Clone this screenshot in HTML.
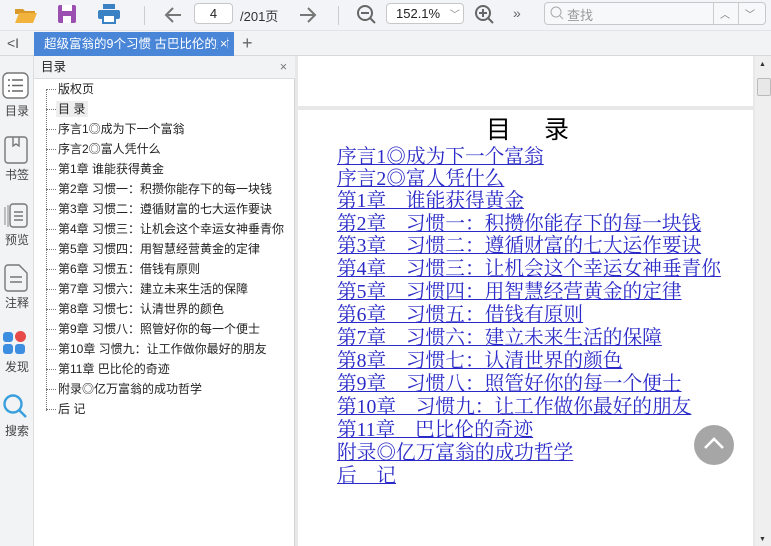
<!DOCTYPE html>
<html><head><meta charset="utf-8"><style>
*{margin:0;padding:0;box-sizing:border-box}
body{width:771px;height:546px;overflow:hidden;background:#f2f3f5;font-family:"Liberation Sans","Noto Sans CJK SC",sans-serif;position:relative;font-size:12px;color:#222}
.abs{position:absolute}
#tb{left:0;top:0;width:771px;height:31px;background:#f2f4f7;border-bottom:1px solid #e2e4e8}
#tabs{left:0;top:32px;width:771px;height:24px;background:#f2f3f5;border-bottom:1px solid #d8d8d8}
#tab{left:34px;top:32px;width:200px;height:24px;background:#4a86d8;color:#fff;font-size:12.5px;line-height:24px;padding-left:10px;white-space:nowrap;overflow:hidden}
#lc{left:0;top:56px;width:34px;height:490px;background:#f2f3f5;border-right:1px solid #ddd}
#sb{left:34px;top:56px;width:261px;height:490px;background:#fff;border-right:1px solid #d4d4d4}
#sbh{left:34px;top:56px;width:261px;height:23px;background:#f2f3f5;border-bottom:1px solid #ddd;font-size:12.5px;line-height:22px;padding-left:7px}
.toc{left:46px;font-size:12px;line-height:14px;white-space:nowrap}
.toc:before{content:"";display:inline-block;width:10px;border-top:1px dotted #777;vertical-align:middle;margin-right:2px}
#vl{left:46px;top:90px;height:321px;border-left:1px dotted #777}
#doc{left:295px;top:56px;width:460px;height:490px;background:#e8e8e8}
.pg{background:#fff}
.lk{left:337px;font-family:"Liberation Serif","Noto Serif CJK SC",serif;font-size:19.7px;line-height:22px;color:#2a2ac8;text-decoration:underline;white-space:pre}
.ic{position:absolute;left:4px;width:26px;text-align:center;font-size:12px;color:#444}
</style></head><body>
<div id="tb" class="abs">
<svg class="abs" style="left:14px;top:5px" width="24" height="20"><path d="M1 4h8l2 2h10v3H1z" fill="#d99a2b"/><path d="M1 18l4-10h18l-4 10z" fill="#f2b33d"/></svg>
<svg class="abs" style="left:57px;top:4px" width="20" height="20"><rect x="1" y="1" width="18" height="18" rx="2" fill="#9b4fb0"/><rect x="5" y="1" width="10" height="6" fill="#fff"/><rect x="6" y="12" width="8" height="7" fill="#fff"/></svg>
<svg class="abs" style="left:98px;top:4px" width="22" height="20"><rect x="5" y="0" width="12" height="5" fill="#3b82c4"/><rect x="0" y="6" width="22" height="9" rx="2" fill="#3b82c4"/><rect x="5" y="11" width="12" height="8" fill="#fff" stroke="#3b82c4" stroke-width="2"/></svg>
<div class="abs" style="left:144px;top:6px;height:19px;border-left:1px solid #ccc"></div>
<svg class="abs" style="left:163px;top:5px" width="20" height="20"><path d="M18 10H3M10 3L3 10l7 7" stroke="#777" stroke-width="2" fill="none"/></svg>
<div class="abs" style="left:194px;top:3px;width:39px;height:21px;border:1px solid #c8c8c8;border-radius:4px;background:#fff;text-align:center;line-height:19px;font-size:13px">4</div>
<div class="abs" style="left:240px;top:6px;font-size:13px;color:#333">/201页</div>
<svg class="abs" style="left:298px;top:5px" width="20" height="20"><path d="M2 10h15M10 3l7 7-7 7" stroke="#777" stroke-width="2" fill="none"/></svg>
<div class="abs" style="left:338px;top:6px;height:19px;border-left:1px solid #ccc"></div>
<svg class="abs" style="left:356px;top:4px" width="22" height="22"><circle cx="9" cy="9" r="7" stroke="#666" stroke-width="2" fill="none"/><path d="M5 9h8M14 14l5 5" stroke="#666" stroke-width="2"/></svg>
<div class="abs" style="left:386px;top:3px;width:78px;height:21px;border:1px solid #c8c8c8;border-radius:4px;background:#fff;line-height:19px;font-size:13px;padding-left:9px">152.1% <span style="color:#888;font-size:10px;margin-left:6px">﹀</span></div>
<svg class="abs" style="left:474px;top:4px" width="22" height="22"><circle cx="9" cy="9" r="7" stroke="#666" stroke-width="2" fill="none"/><path d="M5 9h8M9 5v8M14 14l5 5" stroke="#666" stroke-width="2"/></svg>
<div class="abs" style="left:513px;top:5px;font-size:14px;color:#666">»</div>
<div class="abs" style="left:544px;top:2px;width:222px;height:23px;border:1px solid #c8c8c8;border-radius:4px;background:#f6f8fa"></div>
<svg class="abs" style="left:550px;top:6px" width="14" height="14"><circle cx="6" cy="6" r="5" stroke="#aaa" fill="none"/><path d="M10 10l3 3" stroke="#aaa"/></svg>
<div class="abs" style="left:567px;top:5px;color:#999;font-size:13px">查找</div>
<div class="abs" style="left:713px;top:3px;height:21px;border-left:1px solid #ccc"></div>
<div class="abs" style="left:738px;top:3px;height:21px;border-left:1px solid #ccc"></div>
<div class="abs" style="left:720px;top:6px;color:#777;font-size:10px">︿</div>
<div class="abs" style="left:745px;top:6px;color:#777;font-size:10px">﹀</div>
</div>
<div id="tabs" class="abs"><div class="abs" style="left:7px;top:3px;font-size:14px;color:#555">&lt;I</div><div class="abs" style="left:242px;top:1px;font-size:18px;color:#666">+</div></div>
<div id="tab" class="abs">超级富翁的9个习惯 古巴比伦的财<span style="position:absolute;left:184px;top:0;background:#4a86d8;padding-left:2px">×</span></div>
<div id="lc" class="abs">
<svg class="abs" style="left:2px;top:16px" width="27" height="27"><rect x="1" y="1" width="25" height="25" rx="5" fill="#fff" stroke="#777" stroke-width="1.4"/><path d="M6 8h2M6 13.5h2M6 19h2M10 8h11M10 13.5h11M10 19h11" stroke="#666" stroke-width="1.6"/></svg>
<div class="ic" style="top:46px">目录</div>
<svg class="abs" style="left:4px;top:80px" width="24" height="28"><rect x="1" y="1" width="22" height="26" rx="3" fill="none" stroke="#777" stroke-width="1.4"/><path d="M9 1v9l3-2 3 2V1" fill="none" stroke="#777" stroke-width="1.4"/></svg>
<div class="ic" style="top:110px">书签</div>
<svg class="abs" style="left:3px;top:145px" width="26" height="28"><path d="M2 24V6M5 26V4" stroke="#888"/><rect x="7" y="3" width="17" height="23" rx="3" fill="none" stroke="#777" stroke-width="1.4"/><path d="M11 11h9M11 15h9M11 19h9" stroke="#777" stroke-width="1.4"/></svg>
<div class="ic" style="top:175px">预览</div>
<svg class="abs" style="left:4px;top:208px" width="24" height="28"><path d="M1 4a3 3 0 013-3h11l8 8v15a3 3 0 01-3 3H4a3 3 0 01-3-3z" fill="none" stroke="#777" stroke-width="1.4"/><path d="M6 13h12M6 18h12" stroke="#777" stroke-width="1.4"/></svg>
<div class="ic" style="top:238px">注释</div>
<div class="abs" style="left:3px;top:276px;width:10px;height:10px;border-radius:3px;background:#3d8ee0"></div>
<div class="abs" style="left:15px;top:275px;width:11px;height:11px;border-radius:50%;background:#e84a4a"></div>
<div class="abs" style="left:3px;top:288px;width:10px;height:10px;border-radius:3px;background:#3d8ee0"></div>
<div class="abs" style="left:15px;top:288px;width:10px;height:10px;border-radius:3px;background:#3d8ee0"></div>
<div class="ic" style="top:302px">发现</div>
<svg class="abs" style="left:2px;top:337px" width="26" height="26"><circle cx="11" cy="11" r="8.5" stroke="#3aa0dd" stroke-width="2.4" fill="none"/><path d="M17 17l7 7" stroke="#3aa0dd" stroke-width="2.6"/></svg>
<div class="ic" style="top:366px">搜索</div>
</div>
<div id="sb" class="abs"></div>
<div id="sbh" class="abs">目录<span style="position:absolute;right:8px;color:#777">×</span></div>
<div id="vl" class="abs"></div>
<div class="abs" style="left:56px;top:101px;width:32px;height:16px;background:#eee"></div>
<div class="abs toc" style="top:82px">版权页</div>
<div class="abs toc" style="top:102px">目 录</div>
<div class="abs toc" style="top:122px">序言1◎成为下一个富翁</div>
<div class="abs toc" style="top:142px">序言2◎富人凭什么</div>
<div class="abs toc" style="top:162px">第1章 谁能获得黄金</div>
<div class="abs toc" style="top:182px">第2章 习惯一：积攒你能存下的每一块钱</div>
<div class="abs toc" style="top:202px">第3章 习惯二：遵循财富的七大运作要诀</div>
<div class="abs toc" style="top:222px">第4章 习惯三：让机会这个幸运女神垂青你</div>
<div class="abs toc" style="top:242px">第5章 习惯四：用智慧经营黄金的定律</div>
<div class="abs toc" style="top:262px">第6章 习惯五：借钱有原则</div>
<div class="abs toc" style="top:282px">第7章 习惯六：建立未来生活的保障</div>
<div class="abs toc" style="top:302px">第8章 习惯七：认清世界的颜色</div>
<div class="abs toc" style="top:322px">第9章 习惯八：照管好你的每一个便士</div>
<div class="abs toc" style="top:342px">第10章 习惯九：让工作做你最好的朋友</div>
<div class="abs toc" style="top:362px">第11章 巴比伦的奇迹</div>
<div class="abs toc" style="top:382px">附录◎亿万富翁的成功哲学</div>
<div class="abs toc" style="top:402px">后 记</div>
<div id="doc" class="abs"></div>
<div class="abs pg" style="left:298px;top:56px;width:455px;height:50px"></div>
<div class="abs pg" style="left:298px;top:110px;width:455px;height:436px"></div>
<div class="abs" style="left:755px;top:56px;width:16px;height:490px;background:#efefef"></div>
<div class="abs" style="left:759px;top:61px;font-size:7px;color:#333">▲</div>
<div class="abs" style="left:757px;top:78px;width:14px;height:18px;border:1px solid #bbb;border-radius:2px;background:#e8e8e8"></div>
<div class="abs" style="left:759px;top:536px;font-size:7px;color:#333">▼</div>
<div class="abs" style="left:486px;top:111px;font-family:'Noto Sans CJK SC',sans-serif;font-size:25px;line-height:34px;color:#000;letter-spacing:4px">目　录</div>
<div class="abs lk" style="top:146px">序言1◎成为下一个富翁</div>
<div class="abs lk" style="top:168px">序言2◎富人凭什么</div>
<div class="abs lk" style="top:190px">第1章　谁能获得黄金</div>
<div class="abs lk" style="top:213px">第2章　习惯一：积攒你能存下的每一块钱</div>
<div class="abs lk" style="top:235px">第3章　习惯二：遵循财富的七大运作要诀</div>
<div class="abs lk" style="top:258px">第4章　习惯三：让机会这个幸运女神垂青你</div>
<div class="abs lk" style="top:281px">第5章　习惯四：用智慧经营黄金的定律</div>
<div class="abs lk" style="top:304px">第6章　习惯五：借钱有原则</div>
<div class="abs lk" style="top:327px">第7章　习惯六：建立未来生活的保障</div>
<div class="abs lk" style="top:350px">第8章　习惯七：认清世界的颜色</div>
<div class="abs lk" style="top:373px">第9章　习惯八：照管好你的每一个便士</div>
<div class="abs lk" style="top:396px">第10章　习惯九：让工作做你最好的朋友</div>
<div class="abs lk" style="top:419px">第11章　巴比伦的奇迹</div>
<div class="abs lk" style="top:442px">附录◎亿万富翁的成功哲学</div>
<div class="abs lk" style="top:465px">后　记</div>
<div class="abs" style="left:694px;top:425px;width:40px;height:40px;border-radius:50%;background:#a6a6a6"></div>
<svg class="abs" style="left:694px;top:425px" width="40" height="40"><path d="M11 23l9-9 9 9" stroke="#fff" stroke-width="2.6" fill="none"/></svg>
</body></html>
